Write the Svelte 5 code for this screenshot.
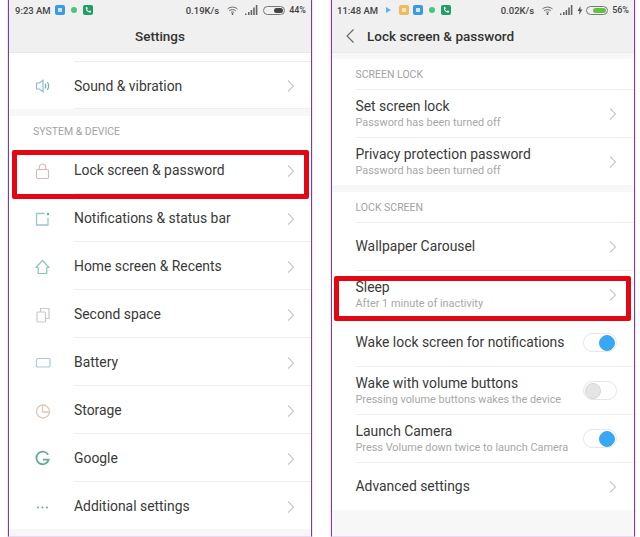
<script>
  const leftRows = [
    { icon: 'lock', label: 'Lock screen & password' },
    { icon: 'notif', label: 'Notifications & status bar' },
    { icon: 'home', label: 'Home screen & Recents' },
    { icon: 'space', label: 'Second space' },
    { icon: 'battery', label: 'Battery' },
    { icon: 'storage', label: 'Storage' },
    { icon: 'google', label: 'Google' },
    { icon: 'more', label: 'Additional settings', last: true }
  ];
  const lockRows = [
    { label: 'Set screen lock', sub: 'Password has been turned off' },
    { label: 'Privacy protection password', sub: 'Password has been turned off', last: true }
  ];
  const screenRows = [
    { label: 'Wallpaper Carousel', end: 'chev' },
    { label: 'Sleep', sub: 'After 1 minute of inactivity', end: 'chev', none: true },
    { label: 'Wake lock screen for notifications', end: 'on' },
    { label: 'Wake with volume buttons', sub: 'Pressing volume buttons wakes the device', end: 'off' },
    { label: 'Launch Camera', sub: 'Press Volume down twice to launch Camera', end: 'on' },
    { label: 'Advanced settings', end: 'chev', last: true }
  ];
</script>

{#snippet chevron()}
  <svg class="chev" width="8" height="14" viewBox="0 0 8 14"><path d="M1 1.500 L6.500 7 L1 12.500" fill="none" stroke="#c8c8c8" stroke-width="1.100"/></svg>
{/snippet}

{#snippet phoneApp()}
  <i class="app green"><svg width="10" height="10" viewBox="0 0 10 10"><path d="M2.800 2.200 4.200 2 4.700 3.700 4 4.400c.4.800 1 1.400 1.800 1.800l.7-.7 1.700.5-.2 1.400C5 8 2.500 5.400 2.800 2.200z" fill="#fff"/></svg></i>
{/snippet}

{#snippet statusIcons()}
  <svg width="11" height="9" viewBox="0 0 11 9" class="wifi"><path d="M.5 3C3.500.5 7.500.5 10.500 3M2.200 4.800C4.200 3.200 6.800 3.200 8.800 4.800M3.900 6.500C4.800 5.800 6.200 5.800 7.100 6.500" fill="none" stroke="#666" stroke-width="1"/><circle cx="5.500" cy="8" r=".9" fill="#555"/></svg>
  <svg width="13" height="10" viewBox="0 0 13 10" class="signal"><path d="M0 8.500h1.500V10H0zM3 7h1.600v3H3zM5.600 5h1.600v5H5.600zM8.200 2.500h1.600V10H8.200zM10.800 0h1.600v10h-1.600z" fill="#666"/></svg>
{/snippet}

{#snippet icon(name)}
  <svg class="ico" width="18" height="18" viewBox="0 0 18 18" fill="none">
    {#if name === 'sound'}
      <path d="M3.500 6h3l3.500-2.800v11.600L6.500 12h-3z" stroke="#8fc0c8" stroke-width="1.200"/>
      <path d="M12 6.500c1 1.500 1 3.500 0 5M14.300 5c1.700 2.500 1.700 5.500 0 8" stroke="#74aeb9" stroke-width="1.200"/>
    {:else if name === 'lock'}
      <rect x="3.500" y="7.500" width="12" height="9" rx="1.200" stroke="#dcb4b4" stroke-width="1.100"/>
      <path d="M6.300 7.500V5.200a3.200 3.200 0 0 1 6.400 0v2.300" stroke="#dcb4b4" stroke-width="1.100"/>
    {:else if name === 'notif'}
      <path d="M11.500 3.500H3.500V15h11.500V8" stroke="#9cc4cc" stroke-width="1.300"/>
      <circle cx="15" cy="4" r="1.200" fill="#6ba6b0"/>
    {:else if name === 'home'}
      <path d="M9.500 2.500 3 9.500h2.200v6h8.600v-6H16z" stroke="#8cc4bc" stroke-width="1.200" stroke-linejoin="round"/>
    {:else if name === 'space'}
      <rect x="4" y="6" width="8.500" height="10" rx="1" stroke="#c8c8d0" stroke-width="1.200"/>
      <path d="M7.500 6V2.500H16V12.500h-3.500" stroke="#c8c8d0" stroke-width="1.200"/>
    {:else if name === 'battery'}
      <rect x="3.500" y="4.500" width="13.500" height="8.500" rx="1" stroke="#a8ccd0" stroke-width="1.200"/>
      <path d="M18.500 7.500v2.500" stroke="#a8ccd0" stroke-width="1.200"/>
    {:else if name === 'storage'}
      <path d="M9.500 3a6.500 6.500 0 1 0 7 7h-7z" stroke="#dcc8bc" stroke-width="1.300"/>
      <path d="M9.500 3a6.800 6.800 0 0 1 7 6.800" stroke="#dcc8bc" stroke-width="1.300"/>
    {:else if name === 'google'}
      <path d="M15.200 4.800A6.300 6.300 0 1 0 15.800 9.600H10" stroke="#6aa89c" stroke-width="1.800"/>
    {:else if name === 'more'}
      <circle cx="5" cy="9.500" r=".9" fill="#6a9aa4"/><circle cx="9.500" cy="9.500" r=".9" fill="#6a9aa4"/><circle cx="14" cy="9.500" r=".9" fill="#6a9aa4"/>
    {/if}
  </svg>
{/snippet}

<div class="page">
  <section class="phone left">
    <header class="top">
      <div class="status">
        <span class="time">9:23 AM</span>
        <i class="app blue"></i>
        <i class="dot"></i>
        {@render phoneApp()}
        <span class="spacer"></span>
        <span class="speed">0.19K/s</span>
        {@render statusIcons()}
        <span class="batt"><b class="fill dark"></b></span>
        <span class="pct">44%</span>
      </div>
      <h1 class="center">Settings</h1>
    </header>
    <div class="block first">
      <div class="row">
        <div class="icon-col">{@render icon('sound')}</div>
        <div class="body topline"><span class="title">Sound &amp; vibration</span>{@render chevron()}</div>
      </div>
    </div>
    <div class="block">
      <div class="caption capleft">SYSTEM &amp; DEVICE</div>
      {#each leftRows as r}
        <div class="row">
          <div class="icon-col">{@render icon(r.icon)}</div>
          <div class="body" class:last={r.last}><span class="title">{r.label}</span>{@render chevron()}</div>
        </div>
      {/each}
    </div>
    <div class="mark markleft"></div>
  </section>

  <section class="phone right">
    <header class="top">
      <div class="status">
        <span class="time">11:48 AM</span>
        <i class="play"></i>
        <i class="app amber"></i>
        <i class="app blue"></i>
        <i class="dot"></i>
        {@render phoneApp()}
        <span class="spacer"></span>
        <span class="speed">0.02K/s</span>
        {@render statusIcons()}
        <svg width="6" height="9" viewBox="0 0 6 9" class="bolt"><path d="M3.500 0 .5 5h2L2 9l3.500-5.500h-2z" fill="#555"/></svg>
        <span class="batt"><b class="fill lime"></b></span>
        <span class="pct">56%</span>
      </div>
      <div class="navbar">
        <svg width="10" height="16" viewBox="0 0 10 16"><path d="M8.500 1.500 2 8l6.500 6.500" fill="none" stroke="#666" stroke-width="1.100"/></svg>
        <h1>Lock screen &amp; password</h1>
      </div>
    </header>
    <div class="block gapped">
      <div class="inset">
        <div class="caption">SCREEN LOCK</div>
        {#each lockRows as r}
          <div class="row">
            <div class="body" class:last={r.last}>
              <div class="texts"><span class="title">{r.label}</span><span class="sub">{r.sub}</span></div>
              {@render chevron()}
            </div>
          </div>
        {/each}
      </div>
    </div>
    <div class="block">
      <div class="inset">
        <div class="caption">LOCK SCREEN</div>
        {#each screenRows as r}
          <div class="row">
            <div class="body" class:last={r.last} class:plain={r.none}>
              <div class="texts">
                <span class="title">{r.label}</span>
                {#if r.sub}<span class="sub">{r.sub}</span>{/if}
              </div>
              {#if r.end === 'chev'}
                {@render chevron()}
              {:else}
                <span class="switch" class:on={r.end === 'on'}><b></b></span>
              {/if}
            </div>
          </div>
        {/each}
      </div>
    </div>
    <div class="mark markright"></div>
  </section>
</div>

<style>
  :global(body) { margin: 0; background: #fff; }
  .page {
    width: 640px; height: 537px; overflow: hidden;
    display: flex; gap: 19px; padding-left: 8px; box-sizing: border-box;
    font-family: Roboto, "Liberation Sans", sans-serif; background: #fff;
  }
  .phone {
    position: relative; width: 304px; height: 537px; box-sizing: border-box; flex: none;
    border-left: 1px solid #7a3f9d; border-right: 1px solid #7a3f9d;
    border-bottom: 1px solid #f0d8f4;
    box-shadow: -1px 0 0 #f1e4f5, 1px 0 0 #f1e4f5;
    background: #f7f7f7; overflow: hidden;
  }
  .top { height: 53px; box-sizing: border-box; background: #f0f0f0; border-bottom: 1px solid #e8e8e8; }
  .status { height: 18px; display: flex; align-items: center; padding: 1px 5px 0 6px; color: #444; font-size: 9.500px; font-weight: 500; }
  .right .status { padding-left: 5px; padding-right: 5px; }
  .time { margin-right: 4px; }
  .spacer { flex: 1; }
  .speed { margin-right: 8px; }
  .wifi { margin-right: 7px; }
  .signal { margin-right: 5px; }
  .right .signal { margin-right: 4px; }
  .bolt { margin-right: 3px; }
  .app { width: 10px; height: 10px; border-radius: 2px; margin-right: 4px; box-sizing: border-box; display: block; }
  .blue { border: 3px solid #3a9ae6; background: #cfe6fa; }
  .amber { border: 3px solid #f0b95e; background: #fbe6c0; }
  .green { background: #1f9d64; }
  .green svg { display: block; }
  .dot { width: 6px; height: 6px; border-radius: 50%; background: #4cc47c; margin-right: 6px; margin-left: 2px; display: block; }
  .play { width: 0; height: 0; border-left: 5px solid #56b8e8; border-top: 3.500px solid transparent; border-bottom: 3.500px solid transparent; margin: 0 8px 0 4px; display: block; }
  .batt { width: 22px; height: 9px; border: 1px solid #777; border-radius: 5px; box-sizing: border-box; display: flex; justify-content: flex-end; padding: 1px; margin-right: 4px; }
  .fill { display: block; height: 100%; border-radius: 3px; }
  .dark { width: 9px; background: #444; }
  .lime { width: 13px; background: #63c142; }
  .pct { font-size: 9px; }
  h1 { margin: 0; font-size: 13.500px; line-height: 18px; font-weight: 500; color: #333; }
  .center { text-align: center; padding-top: 8px; }
  .navbar { display: flex; align-items: center; gap: 12px; padding: 8px 0 0 13px; }
  .block { background: #fff; margin-bottom: 7px; }
  .first { padding-top: 8px; }
  .gapped { margin-top: 6px; }
  .inset { padding-left: 23.500px; }
  .caption { height: 30px; box-sizing: content-box; display: flex; align-items: center; font-size: 10.500px; color: #a3a3a3; border-bottom: 1px solid #eee; }
  .right .caption { height: 29px; padding-top: 1px; }
  .capleft { padding-left: 24px; padding-top: 1px; box-sizing: border-box; border-bottom: 0; }
  .row { display: flex; }
  .icon-col { width: 65px; flex: none; display: flex; align-items: center; padding: 2px 0 0 24px; box-sizing: border-box; }
  .body { flex: 1; min-width: 0; height: 48px; box-sizing: border-box; border-bottom: 1px solid #efefef; display: flex; align-items: center; justify-content: space-between; padding-right: 17px; }
  .left .body { padding-top: 2px; padding-right: 16px; }
  .body.plain { border-bottom: 0; }
  .body.last { border-bottom: 0; height: 47px; }
  .topline { border-top: 1px solid #efefef; }
  .title { font-size: 13.900px; color: #3a3a3a; line-height: 17px; display: block; }
  .sub { font-size: 10.900px; color: #a8a8a8; line-height: 14px; display: block; margin-top: 1px; }
  .switch { width: 34px; height: 19px; border-radius: 10px; border: 1px solid #e6e6e6; box-sizing: border-box; display: flex; align-items: center; padding: 1px; background: #fff; }
  .switch b { width: 14px; height: 14px; border-radius: 50%; background: #e5e5e5; border: 1px solid #d6d6d6; display: block; }
  .switch.on { justify-content: flex-end; }
  .switch.on b { background: #39a7f2; border-color: #39a7f2; }
  .mark { position: absolute; border: 5px solid #e30613; border-radius: 2px; box-sizing: border-box; }
  .markleft { left: 3px; top: 150px; width: 297px; height: 49px; }
  .markright { left: 2px; top: 276px; width: 297px; height: 45px; }
</style>
